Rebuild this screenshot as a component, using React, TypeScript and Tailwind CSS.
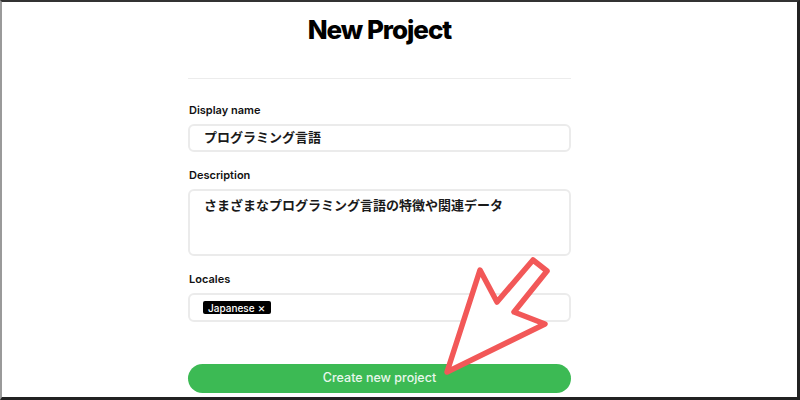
import React from 'react';

const font = { fontFamily: 'Inter, "Noto Sans CJK JP", sans-serif' };

const Label: React.FC<{ children: React.ReactNode }> = ({ children }) => (
    <label className="block text-[11px] leading-[16px] font-semibold text-[#111] mb-[6px] pl-px">{children}</label>
);

const Arrow = () => (
    <svg className="absolute left-0 top-0 pointer-events-none" width="800" height="400" viewBox="0 0 800 400">
        <path
            d="M445 370 L478 268 L495 300 L531 258 L545 269 L512 310 L543 322 Z"
            fill="white"
            stroke="#f25858"
            strokeWidth="5.5"
            strokeLinejoin="round"
        />
    </svg>
);

export default function App() {
    return (
        <div
            style={font}
            className="relative w-[800px] h-[400px] overflow-hidden bg-white border-t-2 border-t-[#333] border-l-2 border-l-[#9a9a9a] border-r-[3px] border-r-[#222] border-b-[3px] border-b-[#222]"
        >
            <div className="ml-[186px] w-[383px]">
                <h1 className="mt-[12px] text-center text-[26px] leading-[32px] font-extrabold tracking-[-0.04em] text-black">
                    New Project
                </h1>
                <div className="mt-[32px] h-px bg-[#ececec]" />

                <div className="mt-[23px]">
                    <Label>Display name</Label>
                    <div className="h-[28px] rounded-md border-2 border-[#ebebeb] flex items-center pl-[14px] text-[13px] font-bold text-[#1a1a1a]">
                        プログラミング言語
                    </div>
                </div>

                <div className="mt-[15px]">
                    <Label>Description</Label>
                    <div className="h-[67px] rounded-md border-2 border-[#ebebeb] pl-[14px] pt-[4px] text-[13px] leading-[20px] font-bold text-[#1a1a1a]">
                        さまざまなプログラミング言語の特徴や関連データ
                    </div>
                </div>

                <div className="mt-[15px]">
                    <Label>Locales</Label>
                    <div className="h-[29px] rounded-md border-2 border-[#ebebeb] flex items-center pl-[13px]">
                        <span className="inline-flex items-center gap-[3px] h-[13px] px-[5px] rounded-[2px] bg-black text-white text-[10px] leading-none font-medium">
                            Japanese<span className="text-[12px] leading-none font-normal">×</span>
                        </span>
                    </div>
                </div>

                <button className="mt-[42px] w-full h-[29px] rounded-full bg-[#3cba54] text-[12.5px] font-medium text-[#e9f7ec]">
                    Create new project
                </button>
            </div>
            <Arrow />
        </div>
    );
}
